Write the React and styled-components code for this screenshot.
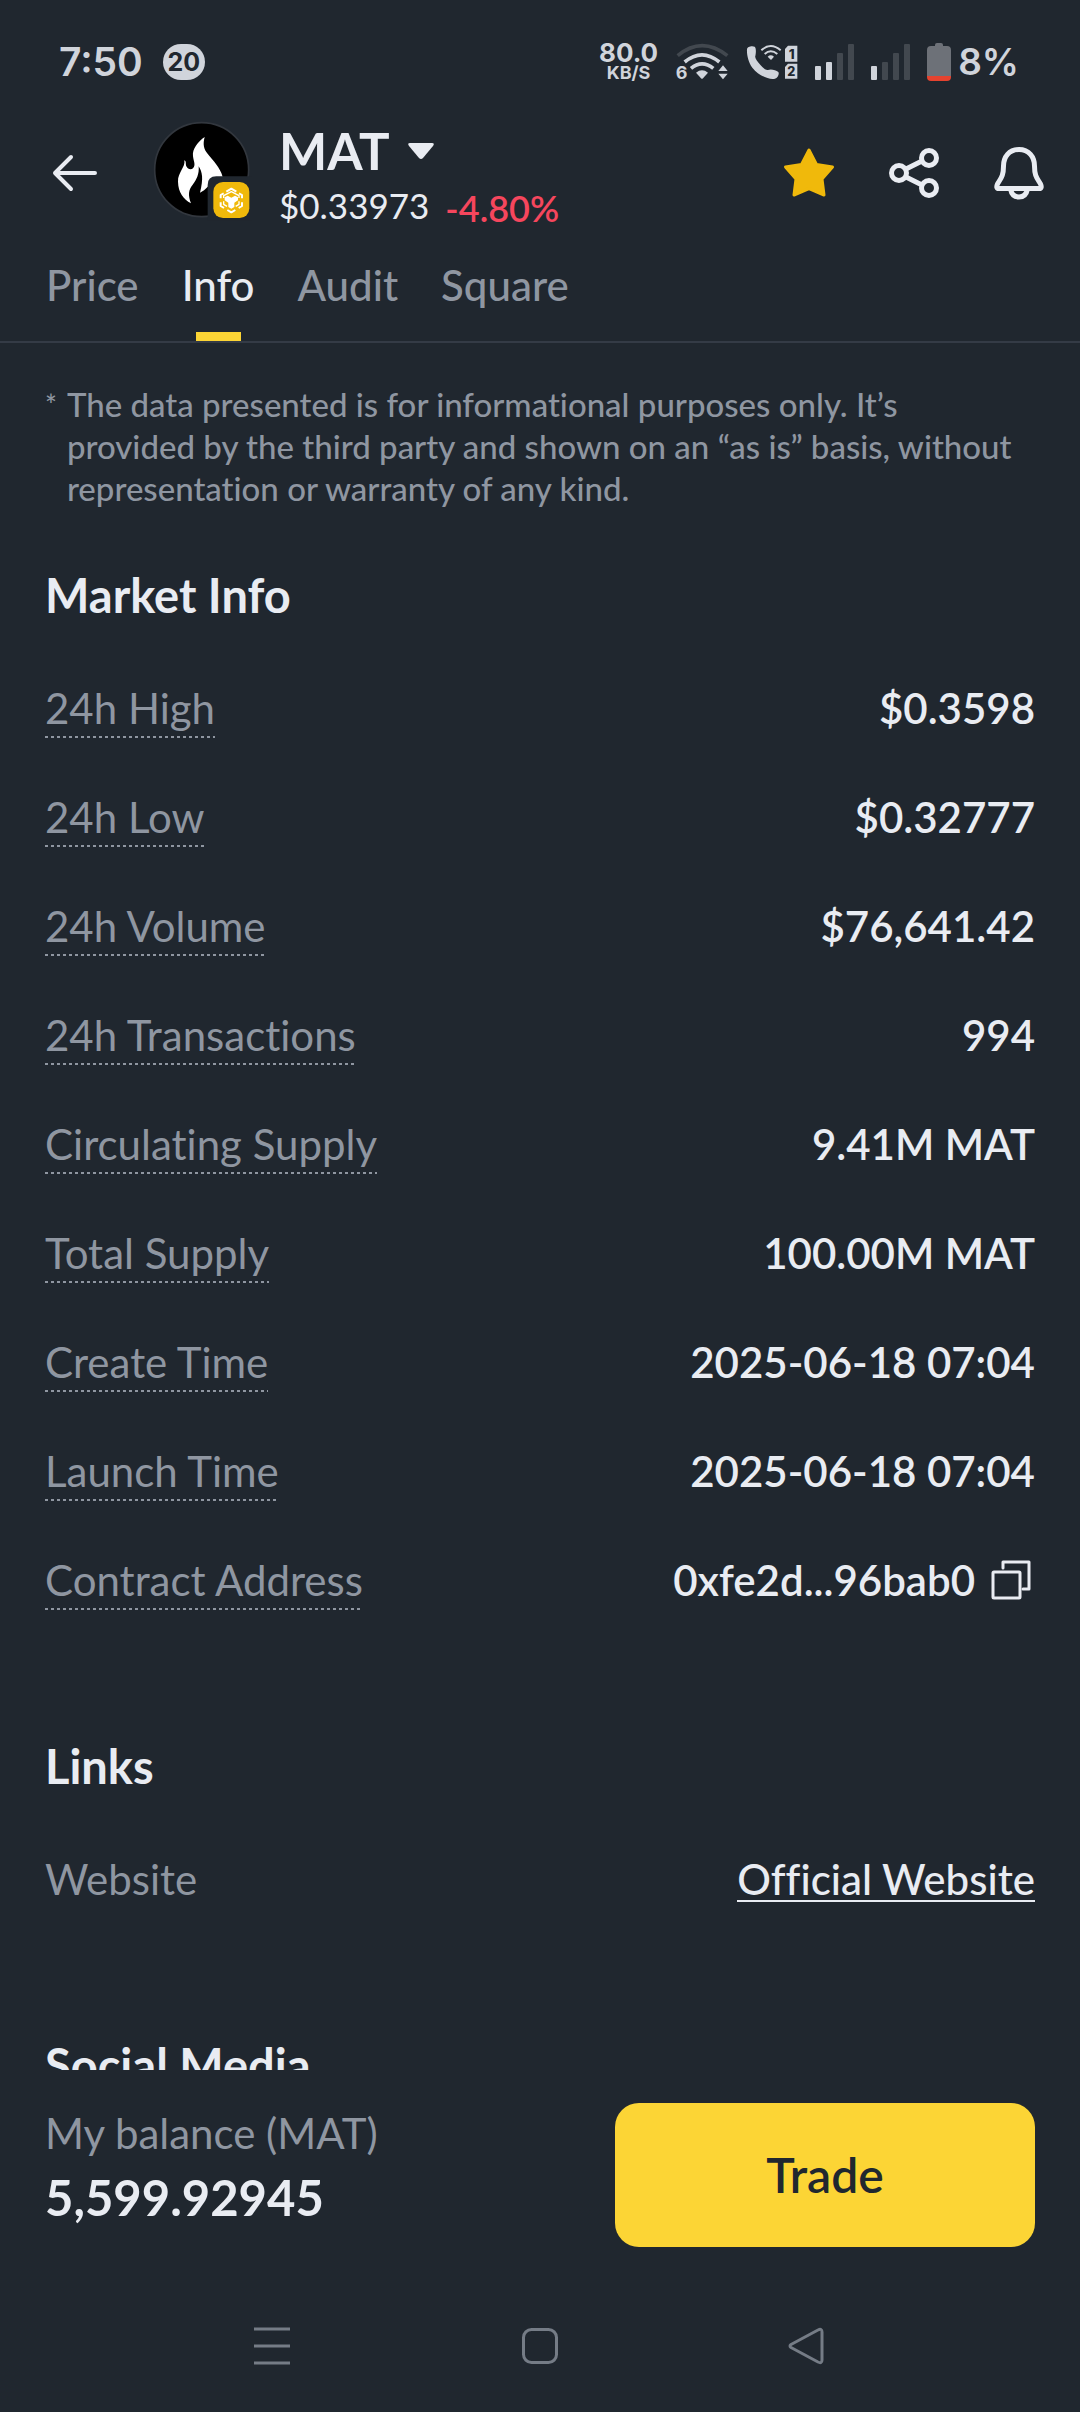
import React from "react";
import styled, { createGlobalStyle } from "styled-components";

const color = {
  bg: "#20272f",
  text: "#e9ecf2",
  muted: "#8f96a1",
  line: "#343b46",
  yellow: "#fcd535",
  gold: "#f0b90b",
  red: "#f6465d",
  status: "#d0d4db",
  faint: "#42484f",
  nav: "#757c86",
};

const GlobalStyle = createGlobalStyle`
  * { box-sizing: border-box; }
  html, body { margin: 0; background: ${color.bg}; }
  button { margin: 0; padding: 0; border: 0; background: none; color: inherit; font: inherit; cursor: pointer; }
  h1, h2, p, dl, dd { margin: 0; font-weight: inherit; }
  svg { display: block; overflow: visible; }
`;

const Page = styled.div`
  display: flex;
  flex-direction: column;
  height: 100vh;
  overflow: hidden;
  background: ${color.bg};
  color: ${color.text};
  font-family: Lato, "Noto Sans", sans-serif;
  font-feature-settings: "liga" 0;
`;

/* Status bar */
const StatusBar = styled.div`
  display: flex;
  align-items: center;
  justify-content: space-between;
  height: 96px;
  flex: none;
  padding: 28px 61px 0 59px;
  color: ${color.status};
  font-family: Inter, sans-serif;
  font-weight: 600;
`;

const StatusGroup = styled.div`
  display: flex;
  align-items: center;
  gap: ${(p) => p.$gap}px;
`;

const Clock = styled.span`
  font-size: 39px;
  line-height: 40px;
`;

const Percent = styled.span`
  font-size: 37px;
  line-height: 40px;
`;

const CountBadge = styled.span`
  display: grid;
  place-items: center;
  width: 42px;
  height: 36px;
  border-radius: 18px;
  background: ${color.status};
  color: ${color.bg};
  font-size: 25px;
  font-weight: 700;
`;

const Speed = styled.span`
  display: flex;
  flex-direction: column;
  align-items: center;
  font-size: 26px;
  font-weight: 700;
  line-height: 22px;
`;

const SpeedUnit = styled.span`
  font-size: 18px;
  line-height: 18px;
`;

/* Header */
const Header = styled.header`
  display: flex;
  align-items: flex-start;
  flex: none;
  padding: 26px 34px 0 48px;
`;

const IconButton = styled.button`
  display: grid;
  place-items: center;
  width: 54px;
  height: 102px;
`;

const TokenLogo = styled.div`
  flex: none;
  margin-left: 52px;
`;

const TokenText = styled.div`
  display: flex;
  flex-direction: column;
  gap: 5px;
  margin-left: 29px;
`;

const TokenSelect = styled.button`
  display: flex;
  align-items: center;
  gap: 18px;
  font-size: 51px;
  font-weight: 700;
  line-height: 58px;
`;

const PriceRow = styled.div`
  display: flex;
  gap: 16px;
  font-size: 35px;
`;

const TokenPrice = styled.span`
  line-height: 40px;
`;

const Change = styled.span`
  color: ${color.red};
  font-size: 36px;
  font-weight: 600;
  line-height: 46px;
`;

const HeaderActions = styled.div`
  display: flex;
  gap: 51px;
  margin-left: auto;
`;

/* Tabs */
const Tabs = styled.nav`
  display: flex;
  gap: 43px;
  flex: none;
  padding: 29px 46px 0;
  border-bottom: 2px solid ${color.line};
`;

const Tab = styled.button`
  display: flex;
  flex-direction: column;
  align-items: center;
  gap: 22px;
  color: ${(p) => (p.$active ? color.text : color.muted)};
  font-size: 42px;
  font-weight: 500;
  line-height: 50px;
`;

const TabMark = styled.span`
  width: 45px;
  height: 9px;
  background: ${(p) => (p.$active ? color.yellow : "transparent")};
`;

/* Content */
const Content = styled.main`
  flex: 1;
  min-height: 0;
  overflow: hidden;
  padding: 40px 45px 0;
`;

const Disclaimer = styled.div`
  display: flex;
  gap: 10px;
  margin-bottom: 56px;
  padding-right: 8px;
  color: ${color.muted};
  font-size: 33px;
  font-weight: 500;
  line-height: 42px;
`;

const Asterisk = styled.span`
  font-size: 28px;
`;

const Section = styled.section`
  margin-bottom: 126px;
`;

const SectionTitle = styled.h2`
  margin-bottom: 56px;
  font-size: 47px;
  font-weight: 700;
  line-height: 60px;
`;

const Rows = styled.dl`
  display: flex;
  flex-direction: column;
  gap: 52px;
`;

const Row = styled.div`
  display: flex;
  align-items: flex-start;
  justify-content: space-between;
  height: 57px;
  font-size: 42px;
  line-height: 54px;
`;

const Label = styled.dt`
  height: 57px;
  color: ${color.muted};
  background: ${(p) =>
    p.$hint
      ? `repeating-linear-gradient(90deg, ${color.muted} 0 3px, transparent 3px 6px) 0 100% / 100% 2px no-repeat`
      : "none"};
`;

const Value = styled.dd`
  display: flex;
  align-items: center;
  gap: 16px;
  font-weight: 600;
`;

const CopyButton = styled.button`
  margin-right: 4px;
`;

const SiteLink = styled.a`
  color: inherit;
  text-decoration: none;
  border-bottom: 2px solid currentColor;
  font-weight: 500;
  line-height: 42px;
  padding-top: 6px;
`;

/* Footer */
const Footer = styled.footer`
  display: flex;
  align-items: flex-start;
  justify-content: space-between;
  flex: none;
  padding: 33px 45px;
`;

const Balance = styled.div`
  display: flex;
  flex-direction: column;
  gap: 10px;
  padding-top: 5px;
`;

const BalanceLabel = styled.span`
  color: ${color.muted};
  font-size: 42px;
  line-height: 50px;
`;

const BalanceValue = styled.span`
  font-size: 49px;
  font-weight: 700;
  line-height: 58px;
`;

const TradeButton = styled.button`
  flex: 0 0 420px;
  height: 144px;
  padding-bottom: 2px;
  border-radius: 24px;
  background: ${color.yellow};
  color: ${color.bg};
  font-size: 48px;
  font-weight: 600;
`;

const SystemNav = styled.nav`
  display: grid;
  grid-template-columns: repeat(3, 1fr);
  justify-items: center;
  align-items: center;
  flex: none;
  height: 132px;
  padding: 0 138px;
`;

const WifiIcon = () => (
  <svg width="54" height="38" viewBox="30 25 162 114" fill="none" stroke={color.status} strokeWidth="11">
    <path d="M38 63Q111 3 187 63" stroke={color.faint} />
    <path d="M59 82Q111 39 163 82" />
    <path d="M78 101Q111 74 145 101" />
    <path d="M93 114Q111 100 129 114L114 131Q111 134 108 131Z" fill={color.status} stroke="none" />
    <path d="M160 109L174 92L188 109ZM160 117L174 134L188 117Z" fill={color.status} stroke="none" />
    <text x="32" y="134" fontSize="54" fontWeight="700" fill={color.status} stroke="none">6</text>
  </svg>
);

const CallIcon = () => (
  <svg width="52" height="38" viewBox="234 25 156 114" fill="none">
    <path
      d="M237 44C237 36 252 32 260 36C265 40 264 56 262 64C260 69 266 78 278 92C286 101 294 107 300 106C308 102 324 106 331 112C335 118 329 130 321 132C303 136 273 124 253 99C240 82 236 58 237 44Z"
      fill={color.status}
    />
    <g stroke={color.status} strokeWidth="6">
      <path d="M280 47Q308 21 338 47" />
      <path d="M290 58Q308 42 328 58" />
    </g>
    <path d="M299 66Q308 58 318 66L309 76Z" fill={color.status} />
    <path d="M360 33H388V81H351V43ZM360 87H388V132H351V97Z" fill={color.status} />
    <text x="362" y="72" fontSize="40" fontWeight="800" fill={color.bg}>1</text>
    <text x="358" y="124" fontSize="38" fontWeight="800" fill={color.bg}>2</text>
  </svg>
);

const SignalIcon = ({ level }) => (
  <svg width="39" height="38" viewBox="0 0 39 38">
    {[14, 18, 27, 36].map((h, i) => (
      <rect key={h} x={i * 11} y={37 - h} width="6" height={h} rx="1" fill={i < level ? color.status : color.faint} />
    ))}
  </svg>
);

const BatteryIcon = () => (
  <svg width="24" height="38" viewBox="0 0 24 38">
    <path d="M8 2Q8 0 10 0H14Q16 0 16 2V3H20Q24 3 24 7V34H0V7Q0 3 4 3H8Z" fill="#6d7178" />
    <path d="M0 33H24V34Q24 38 20 38H4Q0 38 0 34Z" fill="#e5432f" />
  </svg>
);

const BackIcon = () => (
  <svg width="46" height="36" viewBox="0 0 46 36" fill="none" stroke={color.text} strokeWidth="4" strokeLinecap="round" strokeLinejoin="round">
    <path d="M43 18H3M19 2L3 18L19 34" />
  </svg>
);

const MatLogo = () => (
  <svg width="96" height="96" viewBox="26 20 288 288">
    <circle cx="169" cy="163" r="141" fill="#000" stroke="#32373e" strokeWidth="5" />
    <path
      d="M178 65C158 79 140 101 143 123C145 139 152 150 143 159C137 165 127 162 123 153C120 147 124 138 117 135C121 155 97 172 98 199C99 232 114 251 137 264C128 239 129 224 142 208C154 193 162 176 160 153C171 170 175 190 164 232C181 224 196 207 204 188L232 185C224 155 204 138 188 117C175 101 172 87 178 65Z"
      fill="#fff"
    />
    <path d="M187 316V209Q187 183 213 183H320V316Z" fill={color.bg} />
    <rect x="204" y="200" width="108" height="108" rx="29" fill={color.gold} />
    <g fill="none" stroke="#fff" strokeWidth="6" strokeLinejoin="round">
      <path d="M243 229L258 220L273 229M281 234L290 239V249M290 261V272L280 278M270 284L258 291L246 284M236 278L226 272V261M226 249V239L235 234" />
      <path d="M235 248V241L258 229L281 241V248" strokeWidth="4" />
      <path d="M235 258V267L245 273M281 258V267L271 273" strokeWidth="4" />
    </g>
    <path d="M238 246L247 241L258 247L269 241L278 246V255L267 262V275L258 280L249 275V262L238 255Z" fill="#fff" />
  </svg>
);

const CaretIcon = () => (
  <svg width="26" height="17" viewBox="0 0 26 17" fill={color.text}>
    <path d="M2 0H24Q27 0 25 3L15 15Q13 17 11 15L1 3Q-1 0 2 0Z" />
  </svg>
);

const StarIcon = () => (
  <svg width="50" height="50" viewBox="0 0 50 50" fill={color.gold} stroke={color.gold} strokeWidth="3" strokeLinejoin="round">
    <path d="M25 2L32.500 16.500L48.500 19L38 31L40 47L25 40.500L10 47L12 31L1.500 19L17.500 16.500Z" />
  </svg>
);

const ShareIcon = () => (
  <svg width="50" height="50" viewBox="0 0 50 50" fill="none" stroke={color.text} strokeWidth="5">
    <circle cx="10" cy="25" r="7.500" />
    <circle cx="40" cy="10" r="7.500" />
    <circle cx="40" cy="40" r="7.500" />
    <path d="M17 21L33 13M17 29L33 37" />
  </svg>
);

const BellIcon = () => (
  <svg width="50" height="54" viewBox="0 0 50 54" fill="none" stroke={color.text} strokeWidth="5" strokeLinejoin="round">
    <path d="M25 3.500C15 3.500 9.500 11 9.500 20C9.500 30 7 32 3.500 38Q1.500 42.500 5 42.500H45Q48.500 42.500 46.500 38C43 32 40.500 30 40.500 20C40.500 11 35 3.500 25 3.500Z" />
    <path d="M16.500 43Q18 51 25 51Q32 51 33.500 43" />
  </svg>
);

const CopyIcon = () => (
  <svg width="40" height="40" viewBox="0 0 40 40" fill="none" stroke={color.text} strokeWidth="3" strokeLinejoin="round" strokeLinecap="round">
    <rect x="2" y="12" width="27" height="26" rx="1" />
    <path d="M12 8V2H38V29H32" />
  </svg>
);

const MenuIcon = () => (
  <svg width="36" height="38" viewBox="0 0 36 38" stroke={color.nav} strokeWidth="3">
    <path d="M0 2H36M0 19H36M0 36H36" />
  </svg>
);

const HomeIcon = () => (
  <svg width="36" height="36" viewBox="0 0 36 36" fill="none" stroke={color.nav} strokeWidth="3">
    <rect x="1.5" y="1.5" width="33" height="33" rx="8" />
  </svg>
);

const NavBackIcon = () => (
  <svg width="40" height="36" viewBox="0 0 40 36" fill="none" stroke={color.nav} strokeWidth="3" strokeLinejoin="round">
    <path d="M3 16.500L30 2Q34 0 34 4V32Q34 36 30 34L3 19.500Q1 18 3 16.500Z" />
  </svg>
);

const tabs = ["Price", "Info", "Audit", "Square"];

const marketRows = [
  ["24h High", "$0.3598"],
  ["24h Low", "$0.32777"],
  ["24h Volume", "$76,641.42"],
  ["24h Transactions", "994"],
  ["Circulating Supply", "9.41M MAT"],
  ["Total Supply", "100.00M MAT"],
  ["Create Time", "2025-06-18 07:04"],
  ["Launch Time", "2025-06-18 07:04"],
];

export default function App() {
  return (
    <Page>
      <GlobalStyle />
      <StatusBar>
        <StatusGroup $gap={20}>
          <Clock>7:50</Clock>
          <CountBadge>20</CountBadge>
        </StatusGroup>
        <StatusGroup $gap={17}>
          <Speed>
            80.0
            <SpeedUnit>KB/S</SpeedUnit>
          </Speed>
          <WifiIcon />
          <CallIcon />
          <SignalIcon level={2} />
          <SignalIcon level={1} />
          <StatusGroup $gap={7}>
            <BatteryIcon />
            <Percent>8%</Percent>
          </StatusGroup>
        </StatusGroup>
      </StatusBar>

      <Header>
        <IconButton aria-label="Back">
          <BackIcon />
        </IconButton>
        <TokenLogo>
          <MatLogo />
        </TokenLogo>
        <TokenText>
          <TokenSelect>
            MAT
            <CaretIcon />
          </TokenSelect>
          <PriceRow>
            <TokenPrice>$0.33973</TokenPrice>
            <Change>-4.80%</Change>
          </PriceRow>
        </TokenText>
        <HeaderActions>
          <IconButton aria-label="Favorite">
            <StarIcon />
          </IconButton>
          <IconButton aria-label="Share">
            <ShareIcon />
          </IconButton>
          <IconButton aria-label="Alerts">
            <BellIcon />
          </IconButton>
        </HeaderActions>
      </Header>

      <Tabs>
        {tabs.map((name) => (
          <Tab key={name} $active={name === "Info"}>
            {name}
            <TabMark $active={name === "Info"} />
          </Tab>
        ))}
      </Tabs>

      <Content>
        <Disclaimer>
          <Asterisk>*</Asterisk>
          <p>
            The data presented is for informational purposes only. It’s provided by the third party and shown on an
            “as is” basis, without representation or warranty of any kind.
          </p>
        </Disclaimer>

        <Section>
          <SectionTitle>Market Info</SectionTitle>
          <Rows>
            {marketRows.map(([label, value]) => (
              <Row key={label}>
                <Label $hint>{label}</Label>
                <Value>{value}</Value>
              </Row>
            ))}
            <Row>
              <Label $hint>Contract Address</Label>
              <Value>
                0xfe2d...96bab0
                <CopyButton aria-label="Copy contract address">
                  <CopyIcon />
                </CopyButton>
              </Value>
            </Row>
          </Rows>
        </Section>

        <Section>
          <SectionTitle>Links</SectionTitle>
          <Rows>
            <Row>
              <Label>Website</Label>
              <Value>
                <SiteLink href="#website">Official Website</SiteLink>
              </Value>
            </Row>
          </Rows>
        </Section>

        <Section>
          <SectionTitle>Social Media</SectionTitle>
        </Section>
      </Content>

      <Footer>
        <Balance>
          <BalanceLabel>My balance (MAT)</BalanceLabel>
          <BalanceValue>5,599.92945</BalanceValue>
        </Balance>
        <TradeButton>Trade</TradeButton>
      </Footer>

      <SystemNav>
        <button aria-label="Recent apps">
          <MenuIcon />
        </button>
        <button aria-label="Home">
          <HomeIcon />
        </button>
        <button aria-label="System back">
          <NavBackIcon />
        </button>
      </SystemNav>
    </Page>
  );
}
